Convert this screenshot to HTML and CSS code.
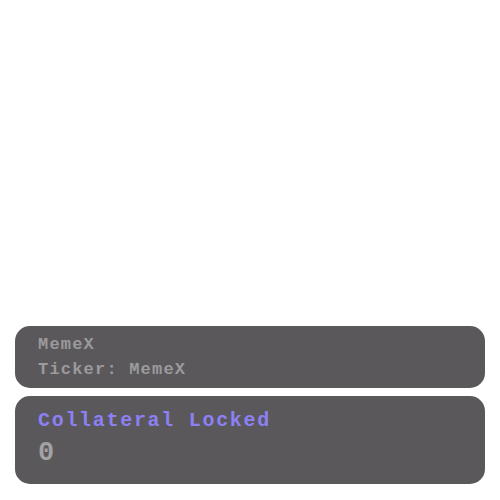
FILE: index.html
```html
<!DOCTYPE html>
<html>
<head>
<meta charset="utf-8">
<link rel="stylesheet" href="styles.css">
</head>
<body>
<main class="page">
  <section class="card info">
    <div class="line">MemeX</div>
    <div class="line">Ticker: MemeX</div>
  </section>
  <section class="card stat">
    <div class="stat-label">Collateral Locked</div>
    <div class="stat-value">0</div>
  </section>
</main>
</body>
</html>
```

FILE: styles.css
```css
html, body {
  margin: 0;
  padding: 0;
  background: #ffffff;
}
.page {
  box-sizing: border-box;
  height: 500px;
  display: flex;
  flex-direction: column;
  justify-content: flex-end;
  gap: 8px;
  padding: 0 15px 16px 15px;
  font-family: "Courier New", "Liberation Mono", monospace;
  font-weight: bold;
}
.card {
  background: #5a585b;
  border-radius: 15px;
  box-sizing: border-box;
}
.info {
  height: 62px;
  padding: 6px 23px;
  color: #9b9a9c;
  font-size: 17px;
  letter-spacing: 1.2px;
}
.info .line {
  line-height: 25px;
}
.stat {
  height: 88px;
  padding: 11px 23px;
}
.stat-label {
  color: #8c80f4;
  font-size: 20px;
  letter-spacing: 1.7px;
  line-height: 28px;
}
.stat-value {
  color: #a2a1a3;
  font-size: 27px;
  line-height: 36px;
}
```
